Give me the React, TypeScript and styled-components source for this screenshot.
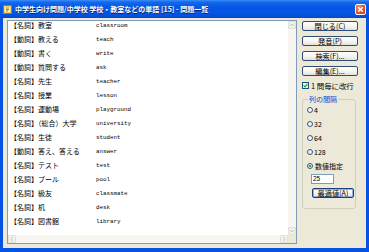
import React from "react";
import styled, { createGlobalStyle } from "styled-components";

const GlobalStyle = createGlobalStyle`
  html, body { margin: 0; padding: 0; background: #ECE9D8; }
  body { font-family: "Noto Sans CJK JP", "Noto Sans", sans-serif; }
  * { box-sizing: border-box; }
`;

const Window = styled.div`
  width: 369px;
  height: 252px;
  display: flex;
  flex-direction: column;
  background: #0752E2;
  overflow: hidden;
`;

const TitleBar = styled.div`
  height: 18px;
  flex: none;
  display: flex;
  align-items: center;
  padding: 0 3px 0 3px;
  background: linear-gradient(
    to bottom,
    #3C8EF5 0%,
    #1469EE 12%,
    #0758E6 35%,
    #0655E3 70%,
    #0650DA 90%,
    #0444C4 100%
  );
`;

const TitleIcon = styled.svg`
  width: 9px;
  height: 9px;
  flex: none;
`;

const TitleText = styled.div`
  flex: 1;
  margin-left: 3px;
  color: #fff;
  font-size: 7px;
  font-weight: 700;
  line-height: 9px;
  white-space: nowrap;
  text-shadow: 0.5px 0.5px 0 #0A1E6E;
`;

const CloseButton = styled.div`
  width: 11px;
  height: 11px;
  flex: none;
  border: 1px solid #fff;
  border-radius: 2px;
  background: radial-gradient(circle at 35% 30%, #F0957A 0%, #E2512A 55%, #C73A14 100%);
  display: flex;
  align-items: center;
  justify-content: center;
`;

const Body = styled.div`
  flex: 1;
  margin: 0 3px 4px 3px;
  background: #ECE9D8;
  display: flex;
  align-items: flex-start;
  gap: 5px;
  padding: 2px 8px 0 4px;
`;

const ListBox = styled.div`
  width: 290px;
  height: 224px;
  border: 1px solid #7F9DB9;
  background: #fff;
  display: grid;
  grid-template-columns: 1fr 8px;
  grid-template-rows: 1fr 8px;
`;

const ListContent = styled.div`
  overflow: hidden;
  padding-left: 2px;
`;

const Row = styled.div`
  height: 14px;
  display: flex;
  align-items: flex-start;
  line-height: 9px;
  color: #000;
  white-space: nowrap;
`;

const Jp = styled.span`
  width: 86px;
  flex: none;
  font-size: 7px;
`;

const En = styled.span`
  font-family: "Liberation Mono", monospace;
  font-size: 5.85px;
`;

const VScroll = styled.div`
  background: #F6F5F0;
  display: flex;
  flex-direction: column;
  justify-content: space-between;
`;

const HScroll = styled.div`
  background: #F6F5F0;
  display: flex;
  justify-content: space-between;
`;

const ArrowBtn = styled.div`
  width: 8px;
  height: 8px;
  border: 1px solid #E4E2D8;
  border-radius: 1px;
  background: #F1F0EA;
  display: flex;
  align-items: center;
  justify-content: center;
`;

const Corner = styled.div`
  background: #ECE9D8;
`;

const Side = styled.div`
  width: 56px;
  margin-top: 1px;
  display: flex;
  flex-direction: column;
`;

const Button = styled.div`
  width: 56px;
  height: 10px;
  flex: none;
  border: 1px solid #2E4C74;
  border-radius: 2px;
  background: linear-gradient(to bottom, #FFFFFF 0%, #F4F3EE 60%, #E3E0D6 100%);
  display: flex;
  align-items: center;
  justify-content: center;
  font-size: 7.2px;
  line-height: 8px;
  color: #000;
  white-space: nowrap;
  & + & {
    margin-top: 5px;
  }
`;

const DefaultButton = styled(Button)`
  width: 42px;
  margin: 4px 0 0 6px;
  border-color: #1B3F7A;
  box-shadow: inset 0 0 0 1px #8DB2E3;
`;

const CheckRow = styled.div`
  margin-top: 5px;
  height: 9px;
  display: flex;
  align-items: center;
  gap: 2px;
  font-size: 7.4px;
  line-height: 9px;
  white-space: nowrap;
`;

const CheckBox = styled.div`
  width: 7px;
  height: 7px;
  flex: none;
  border: 1px solid #1C5180;
  background: #F4F4F0;
  display: flex;
  align-items: center;
  justify-content: center;
`;

const Group = styled.fieldset`
  width: 54px;
  margin: 6px 0 0 0;
  padding: 0 0 10px 3px;
  border: 1px solid #D0D0BF;
  border-radius: 3px;
  display: flex;
  flex-direction: column;
  align-items: flex-start;
`;

const Legend = styled.legend`
  margin-left: 2px;
  padding: 0 1px;
  color: #0046D5;
  font-size: 7px;
  line-height: 7px;
`;

const RadioRow = styled.div`
  height: 14px;
  display: flex;
  align-items: center;
  gap: 1px;
  font-size: 7px;
  white-space: nowrap;
  padding-left: 1px;
`;

const Radio = styled.div<{ $on?: boolean }>`
  width: 6px;
  height: 6px;
  flex: none;
  border-radius: 50%;
  border: 1px solid #2F5E8A;
  background: radial-gradient(circle, ${(p) => (p.$on ? "#29A829 0%, #29A829 35%, #EFEFEA 45%" : "#FFFFFF 0%")}, #E4E3DC 100%);
`;

const RadioLabel = styled.span<{ $jp?: boolean }>`
  margin-left: ${(p) => (p.$jp ? 1 : 0)}px;
`;

const NumInput = styled.div`
  width: 23px;
  height: 10px;
  margin: 1px 0 0 5px;
  border: 1px solid #7F9DB9;
  background: #fff;
  font-size: 6.5px;
  line-height: 8px;
  padding-left: 1px;
  font-family: "Liberation Sans", sans-serif;
`;

const rows: [string, string, string][] = [
  ["名詞", "教室", "classroom"],
  ["動詞", "教える", "teach"],
  ["動詞", "書く", "write"],
  ["動詞", "質問する", "ask"],
  ["名詞", "先生", "teacher"],
  ["名詞", "授業", "lesson"],
  ["名詞", "運動場", "playground"],
  ["名詞", "（総合）大学", "university"],
  ["名詞", "生徒", "student"],
  ["動詞", "答え、答える", "answer"],
  ["名詞", "テスト", "test"],
  ["名詞", "プール", "pool"],
  ["名詞", "級友", "classmate"],
  ["名詞", "机", "desk"],
  ["名詞", "図書館", "library"],
];

const spacings: { label: string; on?: boolean; jp?: boolean }[] = [
  { label: "4" },
  { label: "32" },
  { label: "64" },
  { label: "128" },
  { label: "数値指定", on: true, jp: true },
];

const Arrow = ({ dir }: { dir: "up" | "down" | "left" | "right" }) => {
  const pts = {
    up: "1,4 3,2 5,4",
    down: "1,2 3,4 5,2",
    left: "4,1 2,3 4,5",
    right: "2,1 4,3 2,5",
  }[dir];
  return (
    <svg width="6" height="6" viewBox="0 0 6 6">
      <polyline points={pts} fill="none" stroke="#C9C8C0" strokeWidth="1" />
    </svg>
  );
};

export default function App() {
  return (
    <>
      <GlobalStyle />
      <Window>
        <TitleBar>
          <TitleIcon viewBox="0 0 9 9">
            <rect x="0.5" y="0.5" width="8" height="8" fill="#F6D25A" stroke="#B07A10" />
            <rect x="2" y="2" width="5" height="5" fill="#FFF6C8" />
            <path d="M3 3h3M3 4.5h3M3 6h2" stroke="#6A4A10" strokeWidth="0.7" />
          </TitleIcon>
          <TitleText>中学生向け問題/中学校 学校・教室などの単語 [15] - 問題一覧</TitleText>
          <CloseButton>
            <svg width="7" height="7" viewBox="0 0 7 7">
              <path d="M1.2 1.2L5.8 5.8M5.8 1.2L1.2 5.8" stroke="#fff" strokeWidth="1.3" />
            </svg>
          </CloseButton>
        </TitleBar>
        <Body>
          <ListBox>
            <ListContent>
              {rows.map(([pos, jp, en]) => (
                <Row key={jp}>
                  <Jp>【{pos}】{jp}</Jp>
                  <En>{en}</En>
                </Row>
              ))}
            </ListContent>
            <VScroll>
              <ArrowBtn><Arrow dir="up" /></ArrowBtn>
              <ArrowBtn><Arrow dir="down" /></ArrowBtn>
            </VScroll>
            <HScroll>
              <ArrowBtn><Arrow dir="left" /></ArrowBtn>
              <ArrowBtn><Arrow dir="right" /></ArrowBtn>
            </HScroll>
            <Corner />
          </ListBox>
          <Side>
            <Button>閉じる(C)</Button>
            <Button>発音(P)</Button>
            <Button>検索(F)...</Button>
            <Button>編集(E)...</Button>
            <CheckRow>
              <CheckBox>
                <svg width="5" height="5" viewBox="0 0 5 5">
                  <path d="M0.6 2.4L2 3.8L4.4 0.9" fill="none" stroke="#21A121" strokeWidth="1.2" />
                </svg>
              </CheckBox>
              1 問毎に改行
            </CheckRow>
            <Group>
              <Legend>列の間隔</Legend>
              {spacings.map((s) => (
                <RadioRow key={s.label}>
                  <Radio $on={s.on} />
                  <RadioLabel $jp={s.jp}>{s.label}</RadioLabel>
                </RadioRow>
              ))}
              <NumInput>25</NumInput>
              <DefaultButton>最適値(A)</DefaultButton>
            </Group>
          </Side>
        </Body>
      </Window>
    </>
  );
}
